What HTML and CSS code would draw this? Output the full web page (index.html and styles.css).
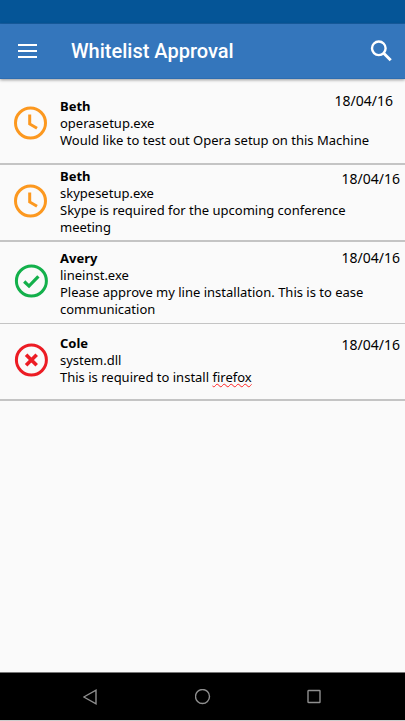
FILE: index.html
```html
<!DOCTYPE html>
<html lang="en">
<head>
<meta charset="utf-8">
<meta name="viewport" content="width=device-width, initial-scale=1">
<title>Whitelist Approval</title>
<link rel="stylesheet" href="styles.css">
</head>
<body>
<div class="status-bar"></div>
<header class="app-bar">
  <button class="icon-button" type="button" aria-label="Menu">
    <svg width="20" height="16" viewBox="0 0 20 16"><path d="M0 2h19M0 8h19M0 14h19" stroke="#fff" stroke-width="2" fill="none"/></svg>
  </button>
  <h1 class="title">Whitelist Approval</h1>
  <button class="icon-button" type="button" aria-label="Search">
    <svg width="22" height="22" viewBox="0 0 22 22" fill="none" stroke="#fff" stroke-width="2.4"><circle cx="8.8" cy="8.3" r="6.8"/><path d="M13.7 13.2L20.7 20.2" stroke-width="2.9"/></svg>
  </button>
</header>
<main class="content">
  <ul class="requests">
    <li class="request request-roomy">
      <svg class="state" viewBox="0 0 34 34" fill="none" stroke="#fc981f" role="img" aria-label="Pending"><circle cx="16.5" cy="17" r="15" stroke-width="3"/><path d="M15.7 8.5V18l7.3 4.3" stroke-width="3"/></svg>
      <div class="body"><h2 class="name">Beth</h2><p>operasetup.exe</p><p>Would like to test out Opera setup on this Machine</p></div>
      <time class="date" datetime="2016-04-18">18/04/16</time>
    </li>
    <li class="request request-compact">
      <svg class="state" viewBox="0 0 34 34" fill="none" stroke="#fc981f" role="img" aria-label="Pending"><circle cx="16.5" cy="17" r="15" stroke-width="3"/><path d="M15.7 8.5V18l7.3 4.3" stroke-width="3"/></svg>
      <div class="body"><h2 class="name">Beth</h2><p>skypesetup.exe</p><p>Skype is required for the upcoming conference meeting</p></div>
      <time class="date" datetime="2016-04-18">18/04/16</time>
    </li>
    <li class="request request-approved">
      <svg class="state" viewBox="0 0 34 34" fill="none" stroke="#13b04b" role="img" aria-label="Approved"><circle cx="17.4" cy="17" r="15" stroke-width="3"/><path d="M10.2 17.5l4.8 4.6 9.4-9.8" stroke-width="3.2"/></svg>
      <div class="body"><h2 class="name">Avery</h2><p>lineinst.exe</p><p>Please approve my line installation. This is to ease communication</p></div>
      <time class="date" datetime="2016-04-18">18/04/16</time>
    </li>
    <li class="request request-rejected">
      <svg class="state" viewBox="0 0 34 34" fill="none" stroke="#ec1c24" role="img" aria-label="Rejected"><circle cx="17.4" cy="17" r="15" stroke-width="3"/><path d="M12.1 11.7l10.6 10.6M22.7 11.7L12.1 22.3" stroke-width="3.6"/></svg>
      <div class="body"><h2 class="name">Cole</h2><p>system.dll</p><p>This is required to install <span class="misspelled">firefox</span></p></div>
      <time class="date" datetime="2016-04-18">18/04/16</time>
    </li>
  </ul>
</main>
<nav class="nav-bar" aria-label="System">
  <button class="nav-button" type="button" aria-label="Back"><svg width="16" height="16" viewBox="0 0 16 16"><path d="M13 1.2v13.6L.8 8z"/></svg></button>
  <button class="nav-button" type="button" aria-label="Home"><svg width="16" height="16" viewBox="0 0 16 16"><circle cx="7.5" cy="7.5" r="7"/></svg></button>
  <button class="nav-button" type="button" aria-label="Recent apps"><svg width="16" height="16" viewBox="0 0 16 16"><rect x="1" y="1.5" width="12" height="12" rx=".5"/></svg></button>
</nav>
</body>
</html>
```
FILE: styles.css
```css
* {
  box-sizing: border-box;
}

body {
  display: flex;
  flex-direction: column;
  min-height: 100vh;
  margin: 0;
  background: #fafafa;
  color: #000;
  font: 13px/17px "Noto Sans", "Open Sans", sans-serif;
}

h1, h2, p, ul {
  margin: 0;
  padding: 0;
}

button {
  display: flex;
  align-items: center;
  justify-content: center;
  padding: 0;
  border: 0;
  background: none;
}

.status-bar {
  height: 24px;
  background: #055597;
  border-bottom: 1px solid #175fa3;
}

.app-bar {
  display: flex;
  align-items: center;
  height: 55px;
  padding: 0 4px 0 8px;
  background: #3476bc;
  border-bottom: 1px solid #2d6db1;
  box-shadow: 0 1px 3px rgba(0, 0, 0, 0.4);
}

.icon-button {
  width: 40px;
  height: 40px;
}

.title {
  flex: 1;
  padding-left: 23px;
  color: #fff;
  font: 500 20px/24px Roboto, sans-serif;
}

.content {
  flex: 1;
}

.requests {
  list-style: none;
}

.request {
  display: grid;
  grid-template-columns: 60px 1fr auto;
  align-items: start;
  border-bottom: 2px solid #c4c4c4;
}

.state {
  grid-area: 1 / 1;
  align-self: center;
  width: 34px;
  height: 34px;
  margin: 0 0 4px 14px;
}

.body {
  grid-area: 1 / 2 / 2 / 4;
  padding-right: 24px;
}

.name {
  font-size: 13px;
  font-weight: 700;
}

.date {
  grid-area: 1 / 3;
  padding-right: 5px;
  font-size: 14px;
}

.request-roomy .state {
  margin: 4px 0 0 14px;
}

.request-roomy .body {
  padding-top: 19px;
  padding-bottom: 14px;
}

.request-roomy .date {
  padding: 13px 12px 0 0;
}

.request-compact .body {
  padding-top: 3px;
  padding-bottom: 4px;
}

.request-compact .date {
  padding-top: 5px;
}

.request-approved {
  border-bottom-width: 1px;
}

.request-approved .body {
  padding-top: 8px;
  padding-bottom: 5px;
}

.request-approved .date {
  padding-top: 7px;
}

.request-rejected .body {
  padding-top: 11px;
  padding-bottom: 13px;
}

.request-rejected .date {
  padding-top: 12px;
}

.misspelled {
  text-decoration: underline wavy #f22 1px;
  text-decoration-skip-ink: none;
  text-underline-offset: 1px;
}

.nav-bar {
  display: flex;
  justify-content: center;
  gap: 64px;
  height: 49px;
  background: #000;
  border-top: 1px solid #777;
  border-bottom: 1px solid #ccc;
}

.nav-button {
  width: 48px;
}

.nav-button svg {
  fill: none;
  stroke: #8f8f8f;
  stroke-width: 1.4;
}
```
